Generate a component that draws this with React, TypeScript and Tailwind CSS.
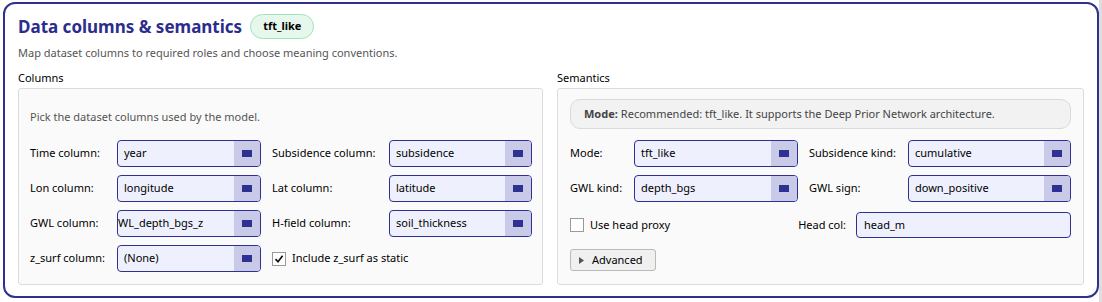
import React from "react";

function Select({ value, width }: { value: string; width: string }) {
  return (
    <div
      className={`${width} h-[27px] flex border border-[#2e3192] rounded-[4px] bg-[#eef1fd] overflow-hidden`}
    >
      <div className="flex-1 flex items-center pl-[6px] text-[11px] text-black whitespace-nowrap overflow-hidden">
        {value}
      </div>
      <div className="w-[26px] shrink-0 bg-[#c8cae8] flex items-center justify-center">
        <div className="w-[10px] h-[7px] bg-[#2e3192]" />
      </div>
    </div>
  );
}

function Label({ children, className = "" }: { children: React.ReactNode; className?: string }) {
  return (
    <div className={`h-[27px] flex items-center text-[11px] text-black whitespace-nowrap ${className}`}>
      {children}
    </div>
  );
}

function Checkbox({ checked }: { checked?: boolean }) {
  return (
    <div className="w-[14px] h-[14px] border border-[#9a9a9a] bg-white flex items-center justify-center">
      {checked && (
        <svg width="10" height="10" viewBox="0 0 10 10">
          <path d="M1.5 5.2 L4 7.8 L8.6 1.8" fill="none" stroke="#111" strokeWidth="1.7" />
        </svg>
      )}
    </div>
  );
}

export default function App() {
  return (
    <div
      className="w-[1102px] h-[302px] bg-white flex"
      style={{ fontFamily: '"Noto Sans", "Open Sans", sans-serif' }}
    >
      <div className="w-[1099px] h-full pl-[3px] pt-[2px]">
        <div className="w-[1096px] h-[296px] border-2 border-[#2e3192] rounded-[12px] px-[13px] pt-[10px]">
          <div className="flex items-center gap-[8px] h-[25px]">
            <h1 className="text-[17px] font-bold text-[#2b2d8c] leading-none">
              Data columns &amp; semantics
            </h1>
            <span className="h-[25px] px-[12px] flex items-center rounded-full bg-[#e6f8ec] border border-[#a3e2b9] text-[11px] font-bold text-black">
              tft_like
            </span>
          </div>
          <p className="mt-[6px] text-[11px] leading-[16px] text-[#555]">
            Map dataset columns to required roles and choose meaning conventions.
          </p>

          <div className="mt-[9px] flex gap-[14px]">
            {/* Columns */}
            <div className="w-[527px]">
              <div className="text-[11px] leading-[16px] text-black">Columns</div>
              <div className="mt-[2px] h-[197px] border border-[#dcdcdc] rounded-[3px] bg-[#fafafa] pl-[11px] pt-[20px]">
                <div className="text-[11px] leading-[16px] text-[#555]">
                  Pick the dataset columns used by the model.
                </div>
                <div className="mt-[15px] grid grid-cols-[87px_144px_128px_143px] gap-y-[8px]">
                  <Label>Time column:</Label>
                  <Select value="year" width="w-[144px]" />
                  <Label className="pl-[11px]">Subsidence column:</Label>
                  <Select value="subsidence" width="w-[143px]" />

                  <Label>Lon column:</Label>
                  <Select value="longitude" width="w-[144px]" />
                  <Label className="pl-[11px]">Lat column:</Label>
                  <Select value="latitude" width="w-[143px]" />

                  <Label>GWL column:</Label>
                  {/* scrolled line edit: the start of the text is out of view */}
                  <div className="w-[144px] h-[27px] flex border border-[#2e3192] rounded-[4px] bg-[#eef1fd] overflow-hidden">
                    <div className="flex-1 flex items-center text-[11px] text-black whitespace-nowrap overflow-hidden">
                      <span className="ml-[-8px]">GWL_depth_bgs_z</span>
                    </div>
                    <div className="w-[26px] shrink-0 bg-[#c8cae8] flex items-center justify-center">
                      <div className="w-[10px] h-[7px] bg-[#2e3192]" />
                    </div>
                  </div>
                  <Label className="pl-[11px]">H-field column:</Label>
                  <Select value="soil_thickness" width="w-[143px]" />

                  <Label>z_surf column:</Label>
                  <Select value="(None)" width="w-[144px]" />
                  <div className="col-span-2 pl-[11px] h-[27px] flex items-center gap-[6px] text-[11px] text-black">
                    <Checkbox checked />
                    <span>Include z_surf as static</span>
                  </div>
                </div>
              </div>
            </div>

            {/* Semantics */}
            <div className="w-[527px]">
              <div className="text-[11px] leading-[16px] text-black">Semantics</div>
              <div className="mt-[2px] h-[197px] border border-[#dcdcdc] rounded-[3px] bg-[#fafafa] pl-[12px] pr-[12px] pt-[10px]">
                <div className="h-[30px] rounded-[10px] border border-[#dadada] bg-[#f2f2f2] flex items-center pl-[13px] text-[11px] text-[#444]">
                  <span className="font-bold mr-[3px]">Mode:</span>
                  <span>Recommended: tft_like. It supports the Deep Prior Network architecture.</span>
                </div>
                <div className="mt-[11px] grid grid-cols-[64px_164px_110px_163px] gap-y-[8px]">
                  <Label>Mode:</Label>
                  <Select value="tft_like" width="w-[164px]" />
                  <Label className="pl-[11px]">Subsidence kind:</Label>
                  <Select value="cumulative" width="w-[163px]" />

                  <Label>GWL kind:</Label>
                  <Select value="depth_bgs" width="w-[164px]" />
                  <Label className="pl-[11px]">GWL sign:</Label>
                  <Select value="down_positive" width="w-[163px]" />
                </div>
                <div className="mt-[10px] h-[26px] flex items-center justify-between">
                  <div className="flex items-center gap-[6px] text-[11px] text-black">
                    <Checkbox />
                    <span>Use head proxy</span>
                  </div>
                  <div className="flex items-center gap-[10px]">
                    <span className="text-[11px] text-black">Head col:</span>
                    <div className="w-[215px] h-[26px] border border-[#2e3192] rounded-[4px] bg-[#eef1fd] flex items-center pl-[7px] text-[11px] text-black">
                      head_m
                    </div>
                  </div>
                </div>
                <button className="mt-[11px] w-[86px] h-[22px] flex items-center gap-[8px] pl-[8px] border border-[#b9b9b9] rounded-[3px] bg-[#f0f0f0] text-[11px] text-black">
                  <svg width="5" height="7" viewBox="0 0 5 7">
                    <path d="M0 0 L5 3.5 L0 7 Z" fill="#555" />
                  </svg>
                  <span>Advanced</span>
                </button>
              </div>
            </div>
          </div>
        </div>
      </div>
      <div className="flex-1 bg-[#dedede]" />
    </div>
  );
}
